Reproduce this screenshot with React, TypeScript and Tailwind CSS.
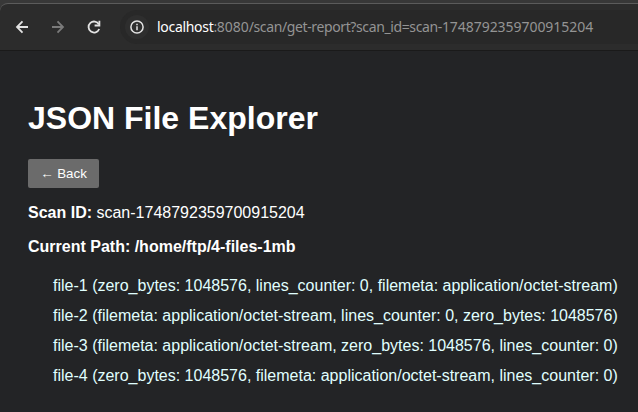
const files = [
  "file-1 (zero_bytes: 1048576, lines_counter: 0, filemeta: application/octet-stream)",
  "file-2 (filemeta: application/octet-stream, lines_counter: 0, zero_bytes: 1048576)",
  "file-3 (filemeta: application/octet-stream, zero_bytes: 1048576, lines_counter: 0)",
  "file-4 (zero_bytes: 1048576, filemeta: application/octet-stream, lines_counter: 0)",
];

function ArrowIcon({ className }: { className?: string }) {
  return (
    <svg viewBox="0 0 18 18" className={`size-[18px] ${className ?? ""}`} fill="none" stroke="currentColor" strokeWidth="1.8">
      <path d="M15 9H4.2M9.5 3.4L4 9l5.5 5.6" />
    </svg>
  );
}

function ReloadIcon() {
  return (
    <svg viewBox="0 0 18 18" className="size-[18px]" fill="none" stroke="currentColor" strokeWidth="1.8">
      <path d="M13.9 6.4A5.5 5.5 0 1 0 14.2 11" />
      <path d="M14.4 2.8v4.7H9.6" />
    </svg>
  );
}

function InfoIcon() {
  return (
    <svg viewBox="0 0 16 16" className="size-4" fill="none" stroke="currentColor" strokeWidth="1.5">
      <circle cx="8" cy="8" r="6.1" />
      <path d="M8 7.2V11.2M8 4.7V6.2" />
    </svg>
  );
}

function Toolbar() {
  return (
    <header className="h-[51px] bg-[#383838] pt-[3px]">
      <div className="flex h-12 items-center rounded-tl-lg border-t border-b border-t-[#5c5c5c] border-b-[#1a1a1a] bg-[#2c2c2c] pl-[13px]">
        <button aria-label="Back" className="text-[#e3e3e3]">
          <ArrowIcon />
        </button>
        <button aria-label="Forward" className="ml-[18px] text-[#7b7b7b]">
          <ArrowIcon className="rotate-180" />
        </button>
        <button aria-label="Reload" className="ml-[18px] text-[#e3e3e3]">
          <ReloadIcon />
        </button>
        <div className="ml-[17px] flex h-[34px] flex-1 items-center rounded-l-full bg-[#282828] pl-[5px]">
          <div className="flex size-6 items-center justify-center rounded-full bg-[#2e2e2e] text-[#e3e3e3]">
            <InfoIcon />
          </div>
          <div className="ml-2 font-['Noto_Sans',sans-serif] text-[14px] leading-5 tracking-[-0.38px] whitespace-nowrap text-[#949494]">
            <span className="tracking-[-0.3px] text-white">localhost</span>:
            <span className="tracking-[-0.05px]">8080</span>/scan/get-report?scan_id=scan-
            <span className="tracking-[-0.05px]">1748792359700915204</span>
          </div>
        </div>
      </div>
    </header>
  );
}

export default function App() {
  return (
    <div className="h-[412px] overflow-hidden bg-[#232426] font-['Liberation_Sans',Arial,sans-serif] text-base leading-[18px] text-white">
      <Toolbar />
      <main className="px-7 pt-[49px]">
        <h1 className="text-[32px] leading-[37px] font-bold">JSON File Explorer</h1>
        <button className="mt-[22px] flex h-[29px] w-[71px] items-center justify-center rounded-xs bg-[#6b6b6b] text-[13.333px] leading-[15px] text-white">
          ← Back
        </button>
        <p className="mt-4">
          <strong>Scan ID:</strong> scan-1748792359700915204
        </p>
        <p className="mt-4 font-bold">Current Path: /home/ftp/4-files-1mb</p>
        <ul className="mt-[21px] flex flex-col gap-3 pl-[25px] whitespace-nowrap text-[#e0ffff]">
          {files.map((file) => (
            <li key={file}>{file}</li>
          ))}
        </ul>
      </main>
    </div>
  );
}
